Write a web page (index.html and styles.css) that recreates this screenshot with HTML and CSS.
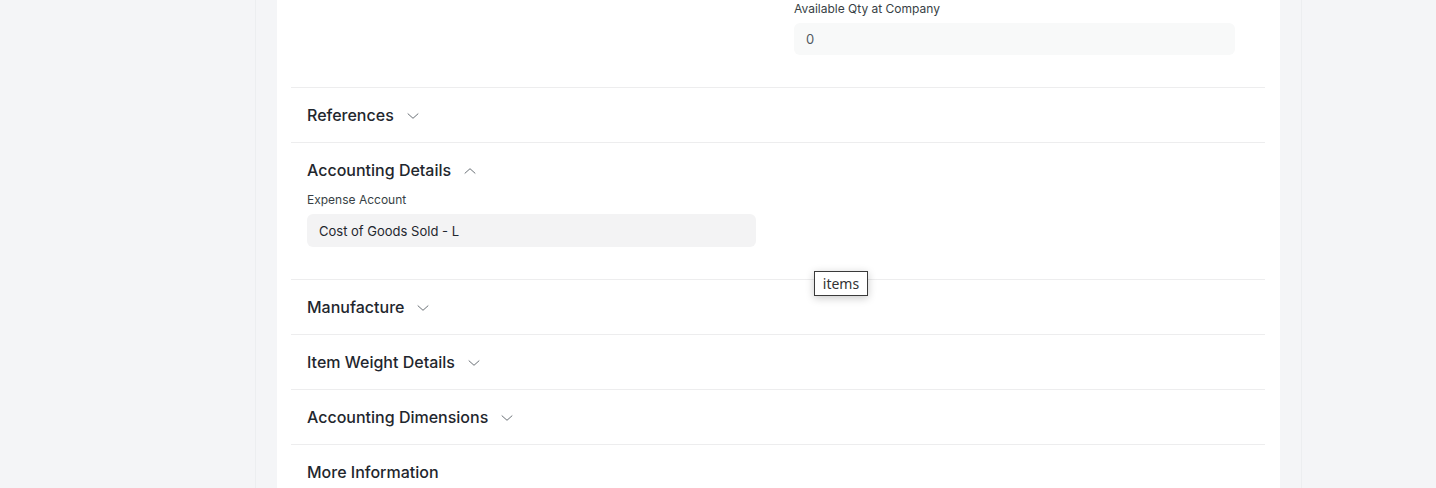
FILE: index.html
```html
<!DOCTYPE html>
<html>
<head>
<meta charset="utf-8">
<link rel="stylesheet" href="styles.css">
</head>
<body>
<div class="page">
  <div class="layout">
    <div class="card">
      <div class="section first">
        <div class="cols">
          <div class="col"></div>
          <div class="col">
            <div class="label lbl1">Available Qty at Company</div>
            <div class="input ro right-input">0</div>
          </div>
        </div>
      </div>
      <div class="section">
        <div class="head"><span>References</span>
          <svg class="chev" width="12" height="12" viewBox="0 0 12 12"><path d="M1 3.8 L6 8.3 L11 3.8" fill="none" stroke="#6b7177" stroke-width="1" stroke-linecap="round" stroke-linejoin="round"/></svg>
        </div>
      </div>
      <div class="section open">
        <div class="head"><span>Accounting Details</span>
          <svg class="chev" width="12" height="12" viewBox="0 0 12 12"><path d="M1 8.2 L6 3.7 L11 8.2" fill="none" stroke="#6b7177" stroke-width="1" stroke-linecap="round" stroke-linejoin="round"/></svg>
        </div>
        <div class="cols">
          <div class="col">
            <div class="label lbl2">Expense Account</div>
            <div class="input left-input">Cost of Goods Sold - L</div>
          </div>
          <div class="col"></div>
        </div>
      </div>
      <div class="section">
        <div class="head"><span>Manufacture</span>
          <svg class="chev" width="12" height="12" viewBox="0 0 12 12"><path d="M1 3.8 L6 8.3 L11 3.8" fill="none" stroke="#6b7177" stroke-width="1" stroke-linecap="round" stroke-linejoin="round"/></svg>
        </div>
      </div>
      <div class="section">
        <div class="head"><span>Item Weight Details</span>
          <svg class="chev" width="12" height="12" viewBox="0 0 12 12"><path d="M1 3.8 L6 8.3 L11 3.8" fill="none" stroke="#6b7177" stroke-width="1" stroke-linecap="round" stroke-linejoin="round"/></svg>
        </div>
      </div>
      <div class="section">
        <div class="head"><span>Accounting Dimensions</span>
          <svg class="chev" width="12" height="12" viewBox="0 0 12 12"><path d="M1 3.8 L6 8.3 L11 3.8" fill="none" stroke="#6b7177" stroke-width="1" stroke-linecap="round" stroke-linejoin="round"/></svg>
        </div>
      </div>
      <div class="section">
        <div class="head"><span>More Information</span></div>
      </div>
    </div>
  </div>
  <div class="tooltip">items</div>
</div>
</body>
</html>
```

FILE: styles.css
```css
html, body {
  margin: 0;
  padding: 0;
  background: #f4f5f7;
  font-family: Inter, "Liberation Sans", sans-serif;
  color: #1f272e;
  overflow: hidden;
}
.page {
  position: relative;
  height: 488px;
  display: flex;
  justify-content: flex-start;
  padding-left: 255px;
}
.layout {
  box-sizing: border-box;
  width: 1047px;
  border-left: 1px solid #eceef0;
  border-right: 1px solid #eceef0;
  background: #f4f5f7;
  padding: 0 21px;
  height: 488px;
}
.card {
  background: #fff;
  height: 488px;
  padding: 0 15px 0 14px;
}
.section {
  border-top: 1px solid #ededee;
  padding: 15px 16px;
}
.section.first {
  border-top: none;
  padding: 0 16px 32px;
}
.section.open {
  padding-bottom: 32px;
}
.head {
  display: flex;
  align-items: center;
  gap: 13px;
  height: 24px;
  font-size: 16px;
  font-weight: 500;
  color: #1f272e;
}
.chev {
  display: block;
  margin-top: 1px;
}
.cols {
  display: grid;
  grid-template-columns: 455px 455px;
  column-gap: 32px;
}
.label {
  font-size: 12px;
  line-height: 16px;
  color: #383f45;
  margin-bottom: 7px;
}
.lbl1 {
  margin-top: 1px;
  margin-bottom: 6px;
}
.lbl2 {
  margin-top: 10px;
  margin-bottom: 6px;
}
.input {
  height: 32px;
  border-radius: 6px;
  background: #f3f3f4;
  font-size: 13px;
  line-height: 33px;
  padding: 0 12px;
  box-sizing: border-box;
  color: #1f272e;
}
.left-input {
  width: 449px;
  height: 33px;
  line-height: 35px;
}
.right-input {
  width: 441px;
  background: #f8f9f9;
  color: #525a62;
}
.tooltip {
  position: absolute;
  left: 814px;
  top: 271px;
  width: 54px;
  height: 25px;
  box-sizing: border-box;
  border: 1px solid #3a3a3a;
  background: #fff;
  font-family: "Noto Sans", "DejaVu Sans", sans-serif;
  font-size: 14px;
  line-height: 23px;
  text-align: center;
  color: #333;
  box-shadow: 0 2px 8px rgba(0,0,0,0.22);
}
```
